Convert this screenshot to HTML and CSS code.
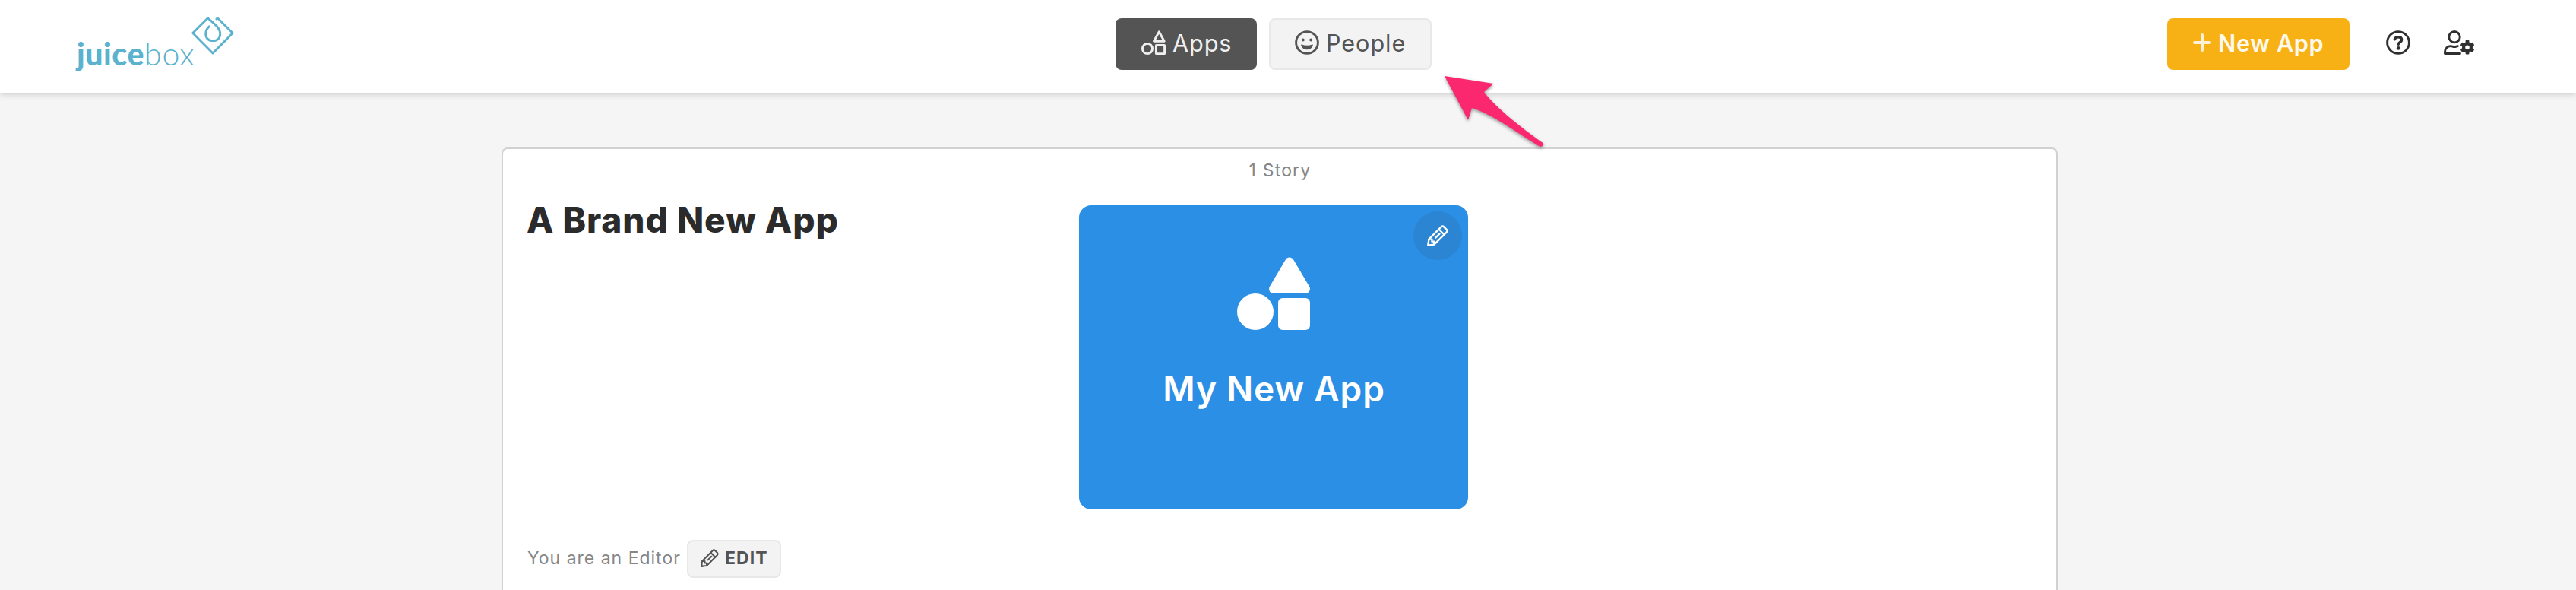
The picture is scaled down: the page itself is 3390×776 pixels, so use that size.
FILE: index.html
```
<!DOCTYPE html>
<html lang="en">
<head>
<meta charset="utf-8">
<title>Juicebox</title>
<link rel="stylesheet" href="styles.css">
</head>
<body>
<svg class="defs" aria-hidden="true">
  <symbol id="pencil" viewBox="0 0 24 24">
    <g fill="none" stroke="currentColor" stroke-width="2" stroke-linejoin="round" stroke-linecap="round">
      <path d="M1.2 22.8L2 16L15.8 2.2Q17.5 .5 19.2 2.2L21.8 4.8Q23.5 6.5 21.8 8.2L8 22Z"/>
      <path d="M13.3 4.7L19.3 10.7M9.6 14.4L14.2 9.8M2.6 16H5.5V18.5H8V21.4"/>
    </g>
    <path fill="currentColor" d="M.2 24L.7 19.5L4.5 23.3Z"/>
  </symbol>
</svg>
<header class="topbar">
  <a class="logo">
    <span class="logo-bold">juice</span><span class="logo-light">box</span>
    <svg class="logo-mark" viewBox="0 0 58 54" fill="none" stroke="#5bb2ce" stroke-width="2.9" stroke-linecap="round" stroke-linejoin="round">
      <path d="M25.500 14.700C21.800 18 20.700 20.500 20.700 24.500C20.700 30 24 33.600 30.200 33.600C36.400 33.600 39.700 30 39.700 24.500C39.700 16 30 10 23.500 3.700L3.700 23.500L30 49.900L56.200 23.500L36.300 3.700L34.900 5"/>
    </svg>
  </a>
  <nav class="tabs">
    <a class="btn tab tab-active">
      <svg class="icon" viewBox="0 0 32 32" fill="none" stroke="currentColor" stroke-width="2.9" stroke-linejoin="round">
        <path d="M23.300 1.800L30.100 14.200H16.500Z"/><circle cx="8" cy="24" r="6.600"/><rect x="19.400" y="19.400" width="11.200" height="11.200" rx=".4"/>
      </svg>
      <span>Apps</span>
    </a>
    <a class="btn tab tab-people">
      <svg class="icon" viewBox="0 0 32 32" fill="currentColor">
        <circle cx="16" cy="16" r="14.400" fill="none" stroke="currentColor" stroke-width="2.900"/>
        <circle cx="10.700" cy="12.600" r="2"/><circle cx="21.200" cy="12.600" r="2"/>
        <path d="M9 18.600Q16 21 23 18.600Q24.300 18.500 23.700 20C22.500 23.600 19.500 25.200 16 25.200C12.500 25.200 9.500 23.600 8.300 20Q7.700 18.500 9 18.600Z"/>
      </svg>
      <span>People</span>
    </a>
  </nav>
  <div class="actions">
    <a class="btn new-app">
      <svg class="plus" viewBox="0 0 24 24" stroke="currentColor" stroke-width="4" stroke-linecap="round"><path d="M12 2V22M2 12H22"/></svg>
      <span>New App</span>
    </a>
    <svg class="icon help" viewBox="0 0 32 32" fill="none" stroke="currentColor">
      <circle cx="16" cy="16" r="14.400" stroke-width="2.900"/>
      <path d="M11.300 11.800C12 9.500 13.500 8.700 16 8.700C18.800 8.700 20.600 10.200 20.600 12.400C20.600 15.600 16.300 15.400 16.300 18.300" stroke-width="3.500" stroke-linecap="round"/>
      <circle cx="16.200" cy="23.400" r="2.400" fill="currentColor" stroke="none"/>
    </svg>
    <svg class="user" viewBox="0 0 40 32" fill="none" stroke="currentColor" stroke-width="2.900" stroke-linecap="round" stroke-linejoin="round">
      <circle cx="14" cy="8.700" r="7.200"/>
      <path d="M21.500 30.500H1.500V28.500C1.500 23.500 5 20.600 9 20.600C11 20.600 12 21.600 14 21.600C16 21.600 16.800 20.700 18.300 20.700"/>
      <g stroke="none" fill="currentColor" transform="translate(31 22.200)">
        <rect x="-2.400" y="-9.400" width="4.800" height="5" rx="1"/>
        <rect x="-2.400" y="-9.400" width="4.800" height="5" rx="1" transform="rotate(60)"/>
        <rect x="-2.400" y="-9.400" width="4.800" height="5" rx="1" transform="rotate(120)"/>
        <rect x="-2.400" y="-9.400" width="4.800" height="5" rx="1" transform="rotate(180)"/>
        <rect x="-2.400" y="-9.400" width="4.800" height="5" rx="1" transform="rotate(240)"/>
        <rect x="-2.400" y="-9.400" width="4.800" height="5" rx="1" transform="rotate(300)"/>
      </g>
      <circle cx="31" cy="22.200" r="4.900" stroke-width="4.200"/>
    </svg>
  </div>
</header>
<main class="panel">
  <p class="count">1 Story</p>
  <div class="row">
    <h1 class="title">A Brand New App</h1>
    <article class="card">
      <span class="card-edit"><svg viewBox="0 0 24 24"><use href="#pencil"/></svg></span>
      <svg class="shapes" viewBox="0 0 96 96" fill="#fff">
        <path d="M69 6.500L48 42H90Z" stroke="#fff" stroke-width="12" stroke-linejoin="round"/>
        <circle cx="24" cy="72" r="24"/><rect x="54" y="54" width="42" height="42" rx="6"/>
      </svg>
      <h2 class="card-title">My New App</h2>
    </article>
  </div>
  <footer class="role">
    <span class="role-text">You are an Editor</span>
    <a class="edit"><svg viewBox="0 0 24 24"><use href="#pencil"/></svg><span>EDIT</span></a>
  </footer>
</main>
<svg class="arrow" viewBox="0 0 150 110">
  <path fill="#fb286f" d="M11 10L75.500 20L63 31C80 53 112 78 140.500 98Q143 102 137 103C112 89 75 60 47 52L42 68Z"/>
</svg>
</body>
</html>
```
FILE: styles.css
```
* { box-sizing: border-box; }
body {
  margin: 0;
  height: 776px;
  overflow: hidden;
  background: #f5f5f5;
  font-family: Inter, "Liberation Sans", sans-serif;
  color: #2b2b2b;
}
h1, h2, p { margin: 0; }
svg { display: block; flex: none; overflow: visible; }
.defs { display: none; }

.topbar {
  display: grid;
  grid-template-columns: 1468px 416px 1fr;
  align-items: start;
  height: 122px;
  background: #fff;
  box-shadow: 0 2px 8px rgba(0, 0, 0, .17);
}
.logo {
  display: flex;
  align-items: flex-end;
  padding: 20px 0 0 101px;
  color: #5bb2ce;
  font: 41px/40px Lato, sans-serif;
}
.logo-bold { font-weight: 900; letter-spacing: .6px; margin-bottom: -17px; }
.logo-light { font-weight: 300; letter-spacing: .8px; margin-bottom: -17px; }
.logo-mark { width: 58px; height: 54px; margin-left: -6px; }

.tabs { display: flex; gap: 16px; padding-top: 24px; }
.btn {
  display: flex;
  align-items: center;
  height: 68px;
  border-radius: 8px;
  font-size: 30.6px;
  line-height: 36px;
  white-space: nowrap;
}
.btn span { margin-top: -2px; }
.icon { width: 32px; height: 32px; margin-top: -4px; }
.tab-active { width: 186px; padding-left: 34px; gap: 9px; background: #545454; color: #f0f0f0; letter-spacing: .93px; }
.tab-people { width: 214px; padding-left: 32px; gap: 9px; background: #f3f3f3; border: 2px solid #e8e8e8; color: #545454; letter-spacing: .94px; }

.actions { display: flex; align-items: flex-start; padding: 24px 0 0 968px; color: #2f2f2f; }
.new-app { width: 240px; padding-left: 34px; gap: 9px; background: #f8b114; color: #fff8ec; font-weight: 600; letter-spacing: .67px; }
.plus { width: 24px; height: 24px; margin-top: -4px; color: #fff0d8; }
.help { margin: 16px 0 0 48px; }
.user { width: 40px; height: 32px; margin: 16px 0 0 44px; }

.panel {
  width: 2048px;
  height: 582px;
  margin: 72px 0 0 660px;
  padding: 14px 31px 0;
  background: #fff;
  border: 2px solid #d1d1d1;
  border-bottom: 0;
  border-radius: 8px 8px 0 0;
}
.count { padding-left: 1px; text-align: center; font-size: 23px; line-height: 28px; letter-spacing: 1.17px; color: #868686; }
.row { display: grid; grid-template-columns: 727px 512px; margin-top: 32px; }
.title { margin-top: -7px; font-size: 46px; line-height: 52px; font-weight: 800; letter-spacing: .97px; }
.card {
  position: relative;
  display: flex;
  flex-direction: column;
  align-items: center;
  gap: 51px;
  height: 400px;
  padding-top: 68px;
  background: #2b8fe5;
  border-radius: 16px;
  color: #fff;
}
.card-edit {
  position: absolute;
  top: 8px;
  right: 8px;
  width: 64px;
  height: 64px;
  display: grid;
  place-items: center;
  border-radius: 50%;
  background: #2b85d3;
}
.card-edit svg { width: 28px; height: 28px; }
.shapes { width: 96px; height: 96px; }
.card-title { padding-left: 1px; font-size: 46px; line-height: 52px; font-weight: 600; letter-spacing: .85px; }

.role { display: flex; align-items: center; height: 50px; margin-top: 40px; padding-left: 1px; }
.role-text { width: 210px; margin-top: -2px; font-size: 23px; line-height: 28px; letter-spacing: .99px; color: #868686; white-space: nowrap; }
.edit {
  display: flex;
  align-items: center;
  gap: 8px;
  width: 124px;
  height: 50px;
  padding-left: 16px;
  background: #f3f3f3;
  border: 2px solid #e8e8e8;
  border-radius: 8px;
  color: #545454;
  font-size: 23px;
  line-height: 28px;
  font-weight: 700;
  letter-spacing: 1.07px;
}
.edit svg { width: 24px; height: 24px; margin-top: -2px; }
.edit span { margin-top: -2px; }

.arrow {
  position: absolute;
  left: 1890px;
  top: 90px;
  width: 150px;
  height: 110px;
  filter: drop-shadow(0 2px 2px rgba(0, 0, 0, .4));
}
```
